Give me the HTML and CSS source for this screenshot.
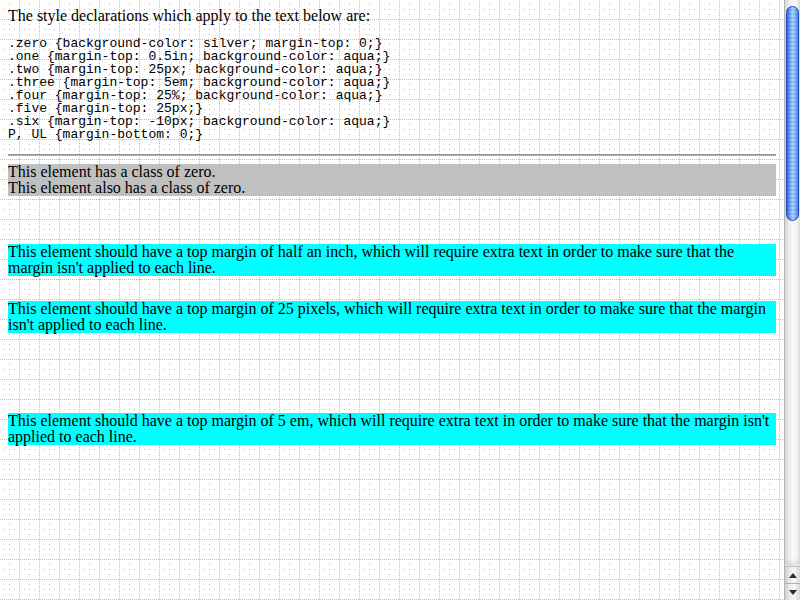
FILE: index.html
```html
<!DOCTYPE html>
<html>
<head>
<meta charset="utf-8">
<title>margin-top</title>
<link rel="stylesheet" href="styles.css">
</head>
<body>
<div class="window">
  <main class="page">
    <p class="intro">The style declarations which apply to the text below are:</p>
    <pre class="code">.zero {background-color: silver; margin-top: 0;}
.one {margin-top: 0.5in; background-color: aqua;}
.two {margin-top: 25px; background-color: aqua;}
.three {margin-top: 5em; background-color: aqua;}
.four {margin-top: 25%; background-color: aqua;}
.five {margin-top: 25px;}
.six {margin-top: -10px; background-color: aqua;}
P, UL {margin-bottom: 0;}</pre>
    <hr class="rule">
    <p class="zero">This element has a class of zero.</p>
    <p class="zero">This element also has a class of zero.</p>
    <p class="one">This element should have a top margin of half an inch, which will require extra text in order to make sure that the margin isn't applied to each line.</p>
    <p class="two">This element should have a top margin of 25 pixels, which will require extra text in order to make sure that the margin isn't applied to each line.</p>
    <p class="three">This element should have a top margin of 5 em, which will require extra text in order to make sure that the margin isn't applied to each line.</p>
  </main>
  <div class="scrollbar">
    <div class="track">
      <div class="thumb"></div>
      <div class="track-end"></div>
    </div>
    <div class="arrow-btn arrow-up"><span class="tri-up"></span></div>
    <div class="arrow-btn arrow-down"><span class="tri-down"></span></div>
  </div>
</div>
</body>
</html>
```
FILE: styles.css
```css
html, body {
  margin: 0;
  padding: 0;
  height: 100%;
  overflow: hidden;
}

body {
  font-family: "Liberation Serif", "Times New Roman", serif;
  font-size: 16px;
  line-height: 16px;
  color: #000;
  background: #fff;
}

.window {
  display: flex;
  height: 600px;
  width: 800px;
}

.page {
  flex: 1;
  padding: 8px;
  overflow: hidden;
  background-color: #fff;
  background-image: url("data:image/svg+xml,%3Csvg xmlns='http://www.w3.org/2000/svg' width='20' height='20'%3E%3Cg fill='none' stroke='%23bdbdbd' stroke-width='1'%3E%3Cline x1='0' y1='19.5' x2='20' y2='19.5' stroke-dasharray='1 1'/%3E%3Cline x1='19.5' y1='1' x2='19.5' y2='21' stroke-dasharray='1 1'/%3E%3C/g%3E%3Cg fill='%23bdbdbd'%3E%3Crect x='9' y='4' width='1' height='1'/%3E%3Crect x='4' y='9' width='1' height='1'/%3E%3Crect x='9' y='9' width='1' height='1'/%3E%3Crect x='14' y='9' width='1' height='1'/%3E%3Crect x='9' y='14' width='1' height='1'/%3E%3C/g%3E%3C/svg%3E");
  background-size: 20px 20px;
  background-repeat: repeat;
}

.page p {
  margin: 0;
}

.intro {
  margin-top: 0;
}

.code {
  font-family: "Liberation Mono", "Courier New", monospace;
  font-size: 13px;
  line-height: 13px;
  margin: 13px 0;
}

.rule {
  margin: 13px 0 8px;
  height: 0;
  border: 0;
  border-top: 1px solid #9a9a9a;
  border-bottom: 1px solid #acacac;
}

.page .zero {
  background-color: silver;
  margin-top: 0;
}

.page .one {
  margin-top: 0.5in;
  background-color: aqua;
}

.page .two {
  margin-top: 25px;
  background-color: aqua;
}

.page .three {
  margin-top: 5em;
  background-color: aqua;
}

/* scrollbar */
.scrollbar {
  width: 16px;
  display: flex;
  flex-direction: column;
  box-sizing: border-box;
  border-left: 1px solid #b4b4b4;
  background: linear-gradient(to right, #d6d6d6 0%, #eeeeee 30%, #fbfbfb 55%, #f2f2f2 80%, #d9d9d9 100%);
}

.track {
  flex: 1;
  display: flex;
  flex-direction: column;
  padding-top: 6px;
}

.thumb {
  height: 215px;
  margin: 0 1px 0 1px;
  box-sizing: border-box;
  border: 1px solid #1a47b4;
  border-radius: 7px;
  background:
    repeating-linear-gradient(to bottom, rgba(255,255,255,0.10) 0 2px, rgba(0,0,40,0.05) 2px 4px),
    linear-gradient(to right, #2a63d6 0%, #4f8cee 18%, #8cbfff 42%, #a6d0ff 55%, #78b0fa 75%, #3f7ee6 100%);
}

.track-end {
  margin-top: auto;
  height: 8px;
  border-radius: 0 0 7px 7px;
  background: linear-gradient(to bottom, rgba(0,0,0,0) 0%, rgba(0,0,0,0.10) 100%);
}

.arrow-btn {
  height: 16px;
  display: flex;
  align-items: center;
  justify-content: center;
  background: linear-gradient(to right, #cfcfcf 0%, #ececec 35%, #f8f8f8 60%, #d8d8d8 100%);
}

.arrow-up {
  border-top: 1px solid #c2c2c2;
  border-bottom: 1px solid #b0b0b0;
}

.tri-up {
  width: 0;
  height: 0;
  border-left: 4px solid transparent;
  border-right: 4px solid transparent;
  border-bottom: 5px solid #2c2c2c;
}

.tri-down {
  width: 0;
  height: 0;
  border-left: 4px solid transparent;
  border-right: 4px solid transparent;
  border-top: 5px solid #2c2c2c;
}
```
